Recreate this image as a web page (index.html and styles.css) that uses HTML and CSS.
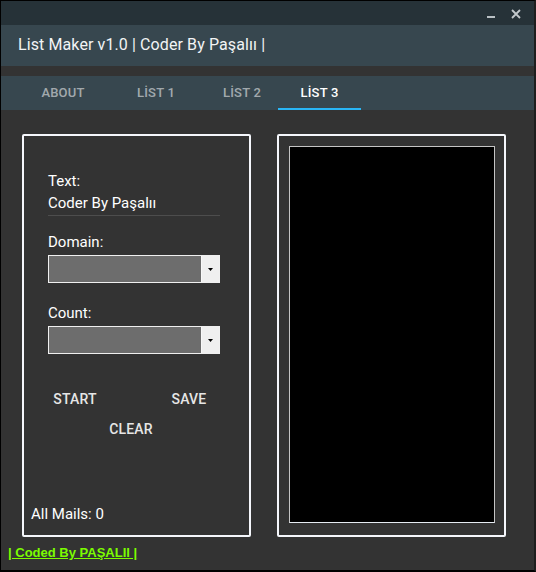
FILE: index.html
```html
<!DOCTYPE html>
<html lang="tr">
<head>
<meta charset="utf-8">
<title>List Maker v1.0</title>
<link rel="stylesheet" href="styles.css">
</head>
<body>
<div class="window">
  <div class="titlebar">
    <svg class="ctl-min" width="8" height="2" viewBox="0 0 8 2"><rect width="8" height="2" fill="#b9c0c4"/></svg>
    <svg class="ctl-close" width="10" height="10" viewBox="0 0 10 10"><path d="M1 1 L9 9 M9 1 L1 9" stroke="#c3c9cc" stroke-width="1.8"/></svg>
  </div>
  <div class="header">List Maker v1.0 | Coder By Paşalıı |</div>
  <div class="tabs">
    <div class="tab t-about">ABOUT</div>
    <div class="tab t-list1">LİST 1</div>
    <div class="tab t-list2">LİST 2</div>
    <div class="tab t-list3 active">LİST 3</div>
  </div>
  <div class="content">
    <div class="panels">
      <div class="panel form">
        <div class="fields">
          <div class="label">Text:</div>
          <div class="textfield">Coder By Paşalıı</div>
          <div class="label gap-domain">Domain:</div>
          <div class="combo"><div class="combo-fill"></div><div class="combo-btn"><svg width="5" height="3" viewBox="0 0 5 3"><path d="M0 0 H5 L2.5 3 Z" fill="#000"/></svg></div></div>
          <div class="label gap-count">Count:</div>
          <div class="combo"><div class="combo-fill"></div><div class="combo-btn"><svg width="5" height="3" viewBox="0 0 5 3"><path d="M0 0 H5 L2.5 3 Z" fill="#000"/></svg></div></div>
        </div>
        <div class="actions row-top">
          <div class="btn">START</div>
          <div class="btn btn-save">SAVE</div>
        </div>
        <div class="actions row-bottom">
          <div class="btn btn-clear">CLEAR</div>
        </div>
        <div class="counter">All Mails: 0</div>
      </div>
      <div class="panel output">
        <div class="list-box"></div>
      </div>
    </div>
    <div class="footer"><span class="credit">| Coded By PAŞALII |</span></div>
  </div>
</div>
</body>
</html>
```
FILE: styles.css
```css
html, body {
  margin: 0;
  padding: 0;
  background: #000;
}

.window {
  width: 536px;
  height: 572px;
  box-sizing: border-box;
  border: 1px solid #000;
  border-right: 2px solid #1e1e1e;
  border-bottom: 2px solid #000;
  background: #333333;
  display: flex;
  flex-direction: column;
  font-family: Roboto, "Noto Sans", sans-serif;
  overflow: hidden;
}

/* window chrome */
.titlebar {
  height: 24px;
  background: #263238;
  display: flex;
  justify-content: flex-end;
  align-items: flex-start;
}
.ctl-min {
  display: block;
  margin-top: 15px;
}
.ctl-close {
  display: block;
  margin-top: 8px;
  margin-left: 16px;
  margin-right: 13px;
}

.header {
  height: 41px;
  line-height: 39px;
  background: #37474f;
  color: #f2f4f5;
  font-size: 16px;
  letter-spacing: 0.1px;
  padding-left: 17px;
  margin-bottom: 10px;
}

/* tab strip */
.tabs {
  height: 34px;
  background: #37474f;
  display: flex;
  padding-left: 19px;
}
.tab {
  line-height: 34px;
  font-size: 13px;
  font-weight: 500;
  letter-spacing: 0.2px;
  text-align: center;
  color: rgba(255, 255, 255, 0.55);
}
.t-about { width: 86px; }
.t-list1 { width: 100px; }
.t-list2 { width: 72px; }
.t-list3 { width: 83px; }
.tab.active {
  color: #ffffff;
  box-shadow: inset 0 -2px 0 #29b6f6;
}

/* main area */
.content {
  flex: 1;
  padding: 24px 0 0 21px;
  display: flex;
  flex-direction: column;
}
.panels {
  display: flex;
  gap: 26px;
}
.panel {
  width: 229px;
  height: 403px;
  box-sizing: border-box;
  border: 2px solid #f5f7fc;
  border-radius: 2px;
}

.form {
  display: flex;
  flex-direction: column;
  padding-top: 36px;
}
.fields {
  padding-left: 24px;
  display: flex;
  flex-direction: column;
}
.label {
  font-size: 15px;
  line-height: 18px;
  color: #ffffff;
  margin-bottom: 4px;
}
.gap-domain { margin-top: 17px; }
.gap-count { margin-top: 21px; }

.textfield {
  width: 172px;
  font-size: 15px;
  line-height: 18px;
  color: #ffffff;
  padding-bottom: 3px;
  border-bottom: 1px solid #4d4d4d;
}

.combo {
  width: 172px;
  height: 28px;
  box-sizing: border-box;
  border: 1px solid #f0f0f0;
  display: flex;
}
.combo-fill {
  flex: 1;
  background: #6d6d6d;
}
.combo-btn {
  width: 17px;
  background: #efefef;
  border-left: 1px solid #f8f8f8;
  display: flex;
  align-items: center;
  justify-content: center;
}
.combo-btn svg { display: block; }

.actions {
  display: flex;
}
.row-top {
  margin-top: 30px;
  padding-left: 19px;
}
.row-bottom {
  padding-left: 75px;
}
.btn {
  width: 64px;
  height: 30px;
  line-height: 30px;
  text-align: center;
  font-size: 14px;
  font-weight: 500;
  letter-spacing: 0.2px;
  color: #e6e6e6;
}
.btn-save { margin-left: 50px; }

.counter {
  margin-top: auto;
  margin-bottom: 12px;
  padding-left: 7px;
  font-size: 15px;
  line-height: 18px;
  color: #ffffff;
}

.output {
  padding: 10px 9px 12px 10px;
  display: flex;
}
.list-box {
  flex: 1;
  background: #000;
  border: 1px solid #c4c4c4;
  border-bottom-color: #e6ebf2;
}

.footer {
  margin-top: 8px;
  margin-left: -14px;
  font-family: "Liberation Sans", Arial, sans-serif;
  font-weight: bold;
  font-size: 13px;
  line-height: 15px;
}
.credit {
  color: #7cfc00;
  text-decoration: underline;
}
```
